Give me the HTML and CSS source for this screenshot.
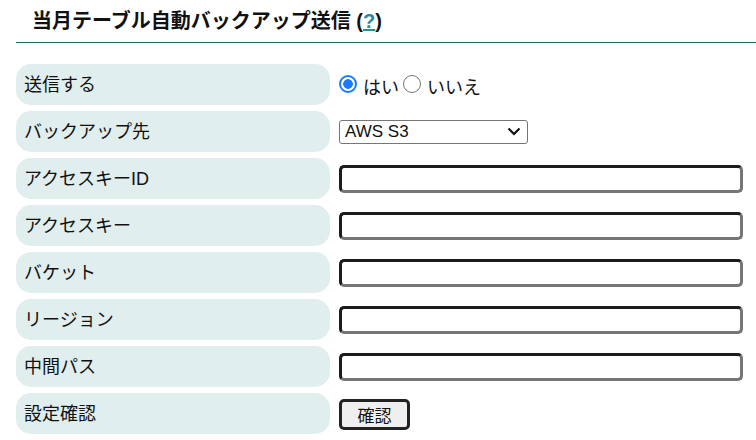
FILE: index.html
```html
<!DOCTYPE html>
<html lang="ja">
<head>
<meta charset="utf-8">
<link rel="stylesheet" href="styles.css">
</head>
<body>
<h2 class="title">当月テーブル自動バックアップ送信 (<a href="#" class="help">?</a>)</h2>
<div class="form">
  <div class="label">送信する</div>
  <div class="value">
    <label class="opt"><input type="radio" name="send" checked>はい</label>
    <label class="opt"><input type="radio" name="send">いいえ</label>
  </div>
  <div class="label">バックアップ先</div>
  <div class="value">
    <div class="select"><span>AWS S3</span><svg class="chev" width="14" height="9" viewBox="0 0 14 9"><path d="M1.5 1.5 L7 7 L12.5 1.5" fill="none" stroke="#111" stroke-width="2.2"/></svg></div>
  </div>
  <div class="label">アクセスキーID</div>
  <div class="value"><input class="text" type="text"></div>
  <div class="label">アクセスキー</div>
  <div class="value"><input class="text" type="text"></div>
  <div class="label">バケット</div>
  <div class="value"><input class="text" type="text"></div>
  <div class="label">リージョン</div>
  <div class="value"><input class="text" type="text"></div>
  <div class="label">中間パス</div>
  <div class="value"><input class="text" type="text"></div>
  <div class="label">設定確認</div>
  <div class="value"><button class="btn" type="button">確認</button></div>
</div>
</body>
</html>
```
FILE: styles.css
```css
html, body {
  margin: 0;
  padding: 0;
  background: #fff;
}
body {
  font-family: "Liberation Sans", "Noto Sans CJK JP", sans-serif;
  color: #111;
}
.title {
  margin: 0 0 0 16px;
  padding: 8px 0 8px 16px;
  font-size: 20px;
  font-weight: bold;
  line-height: 26px;
  border-bottom: 1.5px solid #2f6262;
}
.help {
  color: #2a8a9a;
  text-decoration: underline;
}
.form {
  display: grid;
  grid-template-columns: 314px 1fr;
  grid-auto-rows: 41px;
  row-gap: 6px;
  column-gap: 9px;
  margin: 21px 14px 0 16px;
}
.label {
  background: #e0eeee;
  border-radius: 15px;
  padding-left: 8px;
  display: flex;
  align-items: center;
  font-size: 18px;
  padding-bottom: 3px;
}
.value {
  display: flex;
  align-items: center;
  font-size: 18px;
}
.opt {
  display: flex;
  align-items: center;
  margin-top: 2px;
}
.opt input {
  appearance: none;
  -webkit-appearance: none;
  flex: none;
  display: block;
  width: 18px;
  height: 18px;
  min-width: 18px;
  box-sizing: border-box;
  border: 1.5px solid #767676;
  border-radius: 50%;
  background: #fff;
  margin: 0 6px 3px 0;
}
.opt input:checked {
  border: 2px solid #1a7bff;
  background: radial-gradient(circle, #1a7bff 0 4.5px, #fff 5.1px);
}
.opt + .opt input {
  margin-left: 4px;
}
.select {
  width: 189px;
  height: 24px;
  box-sizing: border-box;
  border: 1px solid #767676;
  border-radius: 3px;
  display: flex;
  align-items: center;
  justify-content: space-between;
  padding: 0 6px 0 5px;
  font-size: 17px;
}
.text {
  width: 404px;
  height: 28px;
  box-sizing: border-box;
  border-style: solid;
  border-width: 3px;
  border-color: #1c1c1c #767676 #767676 #1c1c1c;
  border-radius: 5px;
  background: #fff;
  margin: 0;
}
.btn {
  width: 71px;
  height: 31px;
  box-sizing: border-box;
  border: 3px solid #222;
  border-radius: 5px;
  background: #efefef;
  font-family: "Liberation Sans", "Noto Sans CJK JP", sans-serif;
  font-size: 17px;
  color: #111;
  padding: 0;
  margin-top: 1px;
}
```
